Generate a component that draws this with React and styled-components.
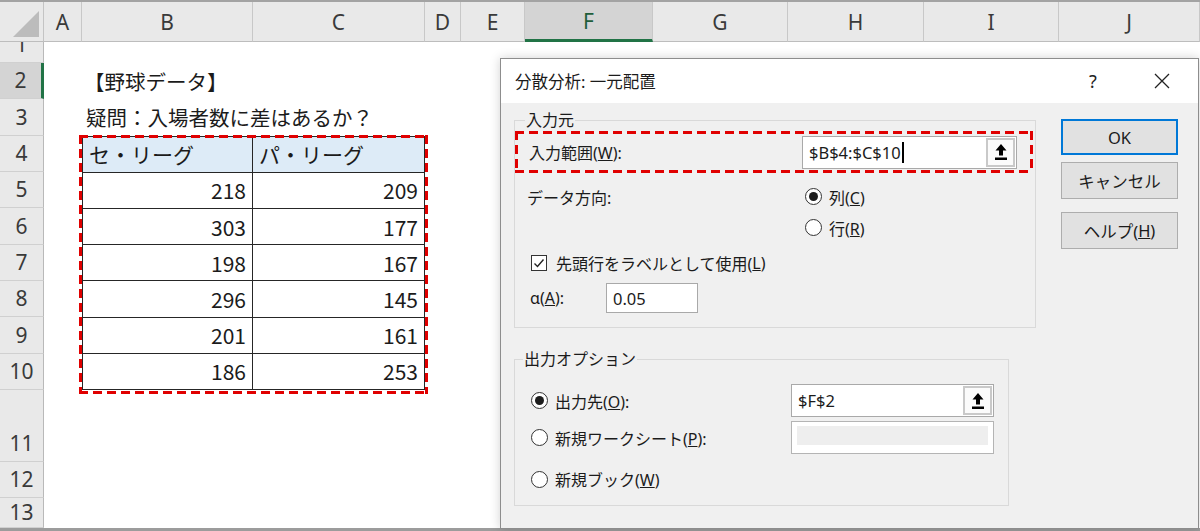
import React from "react";
import styled, { createGlobalStyle, css } from "styled-components";

const GlobalStyle = createGlobalStyle`
  html, body {
    margin: 0;
    padding: 0;
    background: #ffffff;
  }
  body {
    font-family: "Noto Sans", "Noto Sans CJK JP", sans-serif;
    color: #1b1b1b;
  }
`;

const COLUMNS = [
  { key: "A", width: 38 },
  { key: "B", width: 171 },
  { key: "C", width: 172 },
  { key: "D", width: 36 },
  { key: "E", width: 64 },
  { key: "F", width: 128, selected: true },
  { key: "G", width: 135 },
  { key: "H", width: 136 },
  { key: "I", width: 135 },
  { key: "J", width: 141 },
];

// sheet row heights (row 1 is scrolled half out of view)
const ROWS = [
  { n: 1, h: 21 },
  { n: 2, h: 36.33, selected: true },
  { n: 3, h: 36.33 },
  { n: 4, h: 36.33 },
  { n: 5, h: 36.33 },
  { n: 6, h: 36.33 },
  { n: 7, h: 36.33 },
  { n: 8, h: 36.33 },
  { n: 9, h: 36.34 },
  { n: 10, h: 36.34 },
  { n: 11, h: 72 },
  { n: 12, h: 36 },
  { n: 13, h: 30, line: 30 },
];

const DATA = [
  [218, 209],
  [303, 177],
  [198, 167],
  [296, 145],
  [201, 161],
  [186, 253],
];

// red "marker" frame drawn with long dashes, like the annotation in the screenshot
const RED = "#e00000";
const dashedFrame = css`
  background-image: repeating-linear-gradient(90deg, ${RED} 0 9px, transparent 9px 14px),
    repeating-linear-gradient(90deg, ${RED} 0 9px, transparent 9px 14px),
    repeating-linear-gradient(180deg, ${RED} 0 9px, transparent 9px 14px),
    repeating-linear-gradient(180deg, ${RED} 0 9px, transparent 9px 14px);
  background-size: 100% 3px, 100% 3px, 3px 100%, 3px 100%;
  background-position: left top, left bottom, left top, right top;
  background-repeat: no-repeat;
`;

const Screen = styled.div`
  position: relative;
  width: 1200px;
  height: 531px;
  overflow: hidden;
`;

/* ---------- spreadsheet ---------- */

const Sheet = styled.div`
  display: grid;
  grid-template-columns: 44px ${COLUMNS.map((c) => c.width + "px").join(" ")};
  grid-template-rows: 40px ${ROWS.map((r) => r.h + "px").join(" ")};
  border-top: 2px solid #a3a3a3;
  border-bottom: 3px solid #9c9c9c;
  background: #ffffff;
`;

const Corner = styled.div`
  position: relative;
  background: #e9e9e9;
  border-right: 1px solid #c4c4c4;
  border-bottom: 1px solid #bdbdbd;

  &::after {
    content: "";
    position: absolute;
    right: 4px;
    bottom: 4px;
    border-style: solid;
    border-width: 0 0 26px 26px;
    border-color: transparent transparent #bcbcbc transparent;
  }
`;

const ColHeader = styled.div`
  display: flex;
  align-items: center;
  justify-content: center;
  background: #e9e9e9;
  border-right: 1px solid #c8c8c8;
  border-bottom: 1px solid #bdbdbd;
  font-family: "Noto Sans", sans-serif;
  font-size: 21px;
  color: #3a3a3a;

  ${(p) =>
    p.$selected &&
    css`
      background: #d4d4d4;
      color: #1f5e3b;
      border-bottom: 3px solid #217346;
    `}
`;

const RowHeader = styled.div`
  display: flex;
  align-items: flex-end;
  justify-content: center;
  overflow: hidden;
  background: #e9e9e9;
  border-right: 1px solid #b9b9b9;
  border-bottom: 1px solid #d0d0d0;
  font-family: "Noto Sans", sans-serif;
  font-size: 21px;
  color: #3a3a3a;

  span {
    line-height: ${(p) => p.$line || 36}px;
    flex: none;
  }

  ${(p) =>
    p.$selected &&
    css`
      background: #d4d4d4;
      border-right: 3px solid #217346;
    `}
`;

const SheetText = styled.div`
  grid-row: ${(p) => p.$row};
  grid-column: 3 / span 3;
  display: flex;
  align-items: center;
  padding-left: ${(p) => p.$indent || 4}px;
  white-space: nowrap;
  font-family: "Noto Sans CJK JP", sans-serif;
  font-size: 20.5px;
  color: #1b1b1b;
`;

const DataTable = styled.div`
  position: relative;
  grid-column: 3 / 5;
  grid-row: 5 / 12;
  display: grid;
  grid-template-columns: 171px 172px;
  grid-template-rows: repeat(7, 1fr);
  border-top: 1px solid #262626;
  font-family: "Noto Sans CJK JP", sans-serif;
  font-size: 21px;
  color: #1b1b1b;

  &::after {
    content: "";
    position: absolute;
    inset: -2px -3px -4px -3px;
    pointer-events: none;
    ${dashedFrame}
  }
`;

const TableCell = styled.div`
  display: flex;
  align-items: center;
  justify-content: ${(p) => (p.$head ? "flex-start" : "flex-end")};
  padding: 0 6px;
  background: ${(p) => (p.$head ? "#ddebf7" : "#ffffff")};
  border-bottom: 1px solid #262626;
  border-right: 1px solid #262626;
  border-left: ${(p) => (p.$first ? "1px solid #262626" : "none")};
`;

/* ---------- dialog ---------- */

const Dialog = styled.div`
  position: absolute;
  left: 500px;
  top: 58px;
  width: 699px;
  height: 471px;
  box-sizing: border-box;
  display: flex;
  flex-direction: column;
  background: #f0f0f0;
  border: 1px solid #8d8d8d;
  box-shadow: 0 0 10px rgba(0, 0, 0, 0.18);
  font-family: "Noto Sans", "Noto Sans CJK JP", sans-serif;
  font-size: 16px;
  color: #1b1b1b;
`;

const TitleBar = styled.div`
  height: 44px;
  flex: none;
  display: flex;
  align-items: center;
  background: #ffffff;
`;

const TitleText = styled.div`
  flex: 1;
  padding-left: 14px;
  font-size: 16.5px;
`;

const TitleButton = styled.div`
  width: ${(p) => p.$w}px;
  height: 44px;
  display: flex;
  align-items: center;
  justify-content: center;
  font-size: 18px;
  color: #222;
`;

const DialogBody = styled.div`
  flex: 1;
  display: flex;
  gap: 25px;
  padding: 6px 0 0 13px;
`;

const FormColumn = styled.div`
  display: flex;
  flex-direction: column;
  gap: 20px;
`;

const Group = styled.fieldset`
  width: ${(p) => p.$width}px;
  box-sizing: border-box;
  margin: 0;
  padding: 0 0 ${(p) => p.$bottom}px 0;
  min-width: 0;
  border: 1px solid #d9d9d9;
`;

const Legend = styled.legend`
  margin-left: ${(p) => p.$offset}px;
  padding: 0 1px;
  line-height: 22px;
  font-size: 16px;
`;

const RangeRow = styled.div`
  height: 42px;
  box-sizing: border-box;
  margin: 0 2px 0 0;
  display: flex;
  align-items: center;
  padding-left: 14px;
  ${dashedFrame}
`;

const FieldLabel = styled.div`
  width: ${(p) => p.$width}px;
  flex: none;
  white-space: nowrap;
`;

const TextBox = styled.div`
  width: ${(p) => p.$width}px;
  height: ${(p) => p.$height}px;
  box-sizing: border-box;
  display: flex;
  align-items: center;
  padding-left: 6px;
  background: #ffffff;
  border: 1px solid #a9a9a9;
  font-size: 16.5px;
`;

const TextValue = styled.span`
  flex: 1;
  display: flex;
  align-items: center;
`;

const Caret = styled.span`
  display: inline-block;
  width: 2px;
  height: 21px;
  margin-left: 1px;
  background: #000;
`;

const RefButton = styled.div`
  width: 29px;
  height: 29px;
  margin-right: 1px;
  box-sizing: border-box;
  display: flex;
  align-items: center;
  justify-content: center;
  background: #fbfbfb;
  border: 2px solid #c9c9c9;
`;

const DisabledBox = styled.div`
  width: 203px;
  height: 33px;
  box-sizing: border-box;
  padding: 4px 5px 8px 5px;
  background: #ffffff;
  border: 1px solid #b4b4b4;

  div {
    height: 100%;
    background: #eeeeee;
  }
`;

const DirectionGrid = styled.div`
  margin-top: 8px;
  display: grid;
  grid-template-columns: 278px 1fr;
  grid-template-rows: 31px 31px;
  padding-left: 12px;
`;

const GridLabel = styled.div`
  display: flex;
  align-items: center;
`;

const OptionRow = styled.div`
  height: ${(p) => p.$height}px;
  margin-top: ${(p) => p.$top || 0}px;
  padding-left: ${(p) => p.$indent}px;
  display: flex;
  align-items: center;
  white-space: nowrap;
`;

const RadioLabel = styled.label`
  display: flex;
  align-items: center;
  gap: 7px;
  width: ${(p) => (p.$width ? p.$width + "px" : "auto")};
  flex: none;
  white-space: nowrap;
`;

const RadioCircle = styled.span`
  width: 17px;
  height: 17px;
  box-sizing: border-box;
  border-radius: 50%;
  border: 1px solid #333333;
  background: #ffffff;
  display: flex;
  align-items: center;
  justify-content: center;

  &::after {
    content: "";
    width: 9px;
    height: 9px;
    border-radius: 50%;
    background: ${(p) => (p.$checked ? "#1e1e1e" : "transparent")};
  }
`;

const CheckBox = styled.span`
  width: 16px;
  height: 16px;
  box-sizing: border-box;
  border: 1px solid #333333;
  background: #ffffff;
  display: flex;
  align-items: center;
  justify-content: center;
  margin-right: 9px;
`;

const ButtonColumn = styled.div`
  width: 117px;
  margin-top: 10px;
  display: flex;
  flex-direction: column;
`;

const PushButton = styled.div`
  height: ${(p) => p.$height}px;
  margin-top: ${(p) => p.$top || 0}px;
  box-sizing: border-box;
  display: flex;
  align-items: center;
  justify-content: center;
  background: #e1e1e1;
  border: 1px solid #adadad;
  font-size: 16.5px;

  ${(p) =>
    p.$primary &&
    css`
      border: 2px solid #0078d7;
    `}
`;

const UpArrowIcon = () => (
  <svg width="14" height="18" viewBox="0 0 14 18">
    <path d="M7 1 L12.5 7.5 H9 V12.5 H5 V7.5 H1.5 Z" fill="#000" />
    <rect x="1" y="14.5" width="12" height="2.5" fill="#000" />
  </svg>
);

const CloseIcon = () => (
  <svg width="16" height="16" viewBox="0 0 16 16">
    <path d="M1 1 L15 15 M15 1 L1 15" stroke="#222" strokeWidth="1.3" />
  </svg>
);

const CheckMark = () => (
  <svg width="12" height="12" viewBox="0 0 12 12">
    <path d="M1.5 6.5 L4.5 9.5 L10.5 2.5" stroke="#222" strokeWidth="1.4" fill="none" />
  </svg>
);

const Radio = ({ checked, children, width }) => (
  <RadioLabel $width={width}>
    <RadioCircle $checked={checked} />
    <span>{children}</span>
  </RadioLabel>
);

const SpreadSheet = () => (
  <Sheet>
    <Corner />
    {COLUMNS.map((c) => (
      <ColHeader key={c.key} $selected={c.selected}>
        {c.key}
      </ColHeader>
    ))}
    {ROWS.map((r, i) => (
      <RowHeader
        key={r.n}
        $selected={r.selected}
        $line={r.line}
        style={{ gridRow: i + 2, gridColumn: 1 }}
      >
        <span>{r.n}</span>
      </RowHeader>
    ))}
    <SheetText $row={3} $indent={2}>
      【野球データ】
    </SheetText>
    <SheetText $row={4} $indent={4}>
      疑問：入場者数に差はあるか？
    </SheetText>
    <DataTable>
      <TableCell $head $first>
        セ・リーグ
      </TableCell>
      <TableCell $head>パ・リーグ</TableCell>
      {DATA.map(([se, pa], i) => (
        <React.Fragment key={i}>
          <TableCell $first>{se}</TableCell>
          <TableCell>{pa}</TableCell>
        </React.Fragment>
      ))}
    </DataTable>
  </Sheet>
);

const AnovaDialog = () => (
  <Dialog>
    <TitleBar>
      <TitleText>分散分析: 一元配置</TitleText>
      <TitleButton $w={66}>?</TitleButton>
      <TitleButton $w={72}>
        <CloseIcon />
      </TitleButton>
    </TitleBar>
    <DialogBody>
      <FormColumn>
        <Group $width={522} $bottom={14}>
          <Legend $offset={10}>入力元</Legend>
          <RangeRow>
            <FieldLabel $width={273}>
              入力範囲(<u>W</u>):
            </FieldLabel>
            <TextBox $width={215} $height={33}>
              <TextValue>
                $B$4:$C$10
                <Caret />
              </TextValue>
              <RefButton>
                <UpArrowIcon />
              </RefButton>
            </TextBox>
          </RangeRow>
          <DirectionGrid>
            <GridLabel>データ方向:</GridLabel>
            <GridLabel>
              <Radio checked>
                列(<u>C</u>)
              </Radio>
            </GridLabel>
            <GridLabel />
            <GridLabel>
              <Radio>
                行(<u>R</u>)
              </Radio>
            </GridLabel>
          </DirectionGrid>
          <OptionRow $height={30} $top={5} $indent={16}>
            <CheckBox>
              <CheckMark />
            </CheckBox>
            先頭行をラベルとして使用(<u>L</u>)
          </OptionRow>
          <OptionRow $height={30} $top={5} $indent={15}>
            <FieldLabel $width={76}>
              α(<u>A</u>):
            </FieldLabel>
            <TextBox $width={92} $height={30}>
              0.05
            </TextBox>
          </OptionRow>
        </Group>

        <Group $width={495} $bottom={10}>
          <Legend $offset={8}>出力オプション</Legend>
          <OptionRow $height={33} $top={14} $indent={16}>
            <Radio checked width={260}>
              出力先(<u>O</u>):
            </Radio>
            <TextBox $width={203} $height={33}>
              <TextValue>$F$2</TextValue>
              <RefButton>
                <UpArrowIcon />
              </RefButton>
            </TextBox>
          </OptionRow>
          <OptionRow $height={33} $top={4} $indent={16}>
            <Radio width={260}>
              新規ワークシート(<u>P</u>):
            </Radio>
            <DisabledBox>
              <div />
            </DisabledBox>
          </OptionRow>
          <OptionRow $height={32} $top={9} $indent={16}>
            <Radio>
              新規ブック(<u>W</u>)
            </Radio>
          </OptionRow>
        </Group>
      </FormColumn>

      <ButtonColumn>
        <PushButton $primary $height={36}>
          OK
        </PushButton>
        <PushButton $height={37} $top={7}>
          キャンセル
        </PushButton>
        <PushButton $height={37} $top={13}>
          ヘルプ(<u>H</u>)
        </PushButton>
      </ButtonColumn>
    </DialogBody>
  </Dialog>
);

export default function App() {
  return (
    <>
      <GlobalStyle />
      <Screen>
        <SpreadSheet />
        <AnovaDialog />
      </Screen>
    </>
  );
}
